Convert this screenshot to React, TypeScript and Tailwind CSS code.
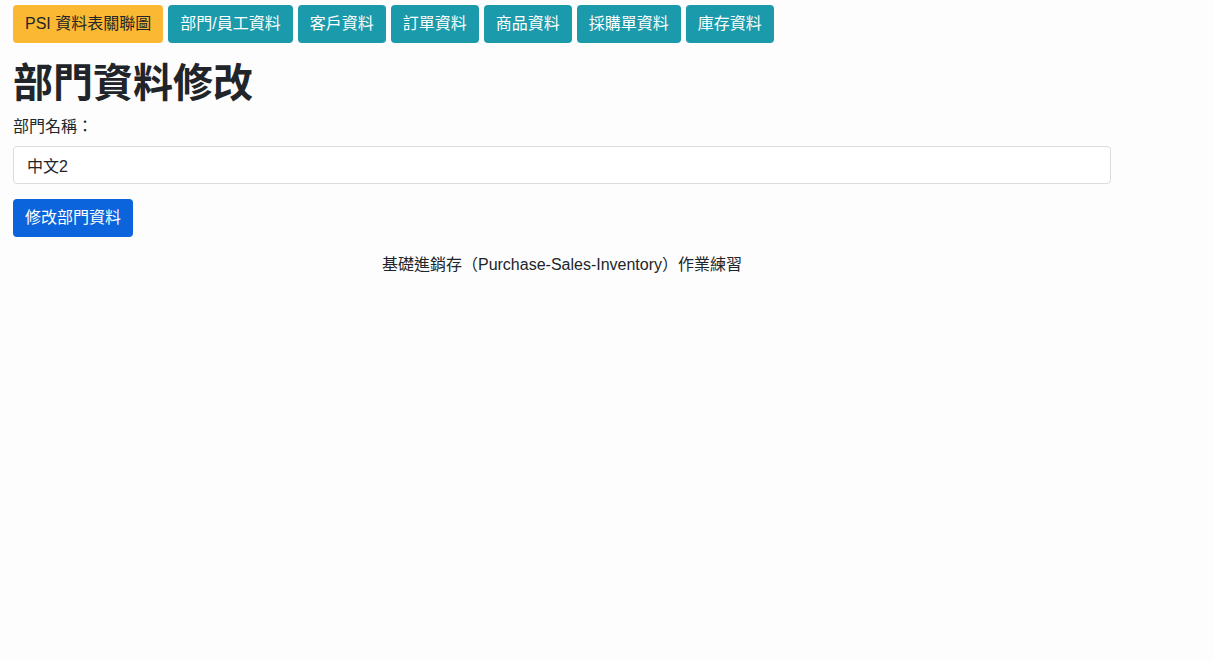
import React, { useState } from 'react';

const navItems = [
  { label: 'PSI 資料表關聯圖', warning: true },
  { label: '部門/員工資料' },
  { label: '客戶資料' },
  { label: '訂單資料' },
  { label: '商品資料' },
  { label: '採購單資料' },
  { label: '庫存資料' },
];

const font = {
  fontFamily: "'Liberation Sans', 'Noto Sans CJK TC', sans-serif",
};

const App = () => {
  const [name, setName] = useState('中文2');

  return (
    <div className="min-h-screen bg-[#fdfdfd] text-[#212529]" style={font}>
      <div className="w-[1124px] px-[13px] pt-[5px]">
        {/* Top nav */}
        <nav className="flex gap-[5px]">
          {navItems.map((item) => (
            <button
              key={item.label}
              className={`h-[38px] px-3 rounded-[4px] text-[16px] leading-none whitespace-nowrap ${
                item.warning
                  ? 'bg-[#fbb832] text-[#212529]'
                  : 'bg-[#1a9aaa] text-white'
              }`}
            >
              {item.label}
            </button>
          ))}
        </nav>

        <h1 className="mt-[16px] mb-[8px] text-[40px] leading-[48px] font-bold">部門資料修改</h1>

        <form onSubmit={(e) => e.preventDefault()}>
          <label className="block text-[16px] leading-[24px] mb-[7px]">部門名稱：</label>
          <input
            value={name}
            onChange={(e) => setName(e.target.value)}
            className="block w-[1098px] h-[38px] px-[13px] text-[16px] border border-[#dcdcdc] rounded-[4px] bg-white outline-none"
          />
          <button
            type="submit"
            className="mt-[15px] h-[38px] px-3 rounded-[4px] bg-[#0b64dc] text-white text-[16px] leading-none"
          >
            修改部門資料
          </button>
        </form>

        <footer className="w-[1098px] mt-[16px] text-center text-[16px] leading-[24px]">
          基礎進銷存（Purchase-Sales-Inventory）作業練習
        </footer>
      </div>
    </div>
  );
};

export default App;
